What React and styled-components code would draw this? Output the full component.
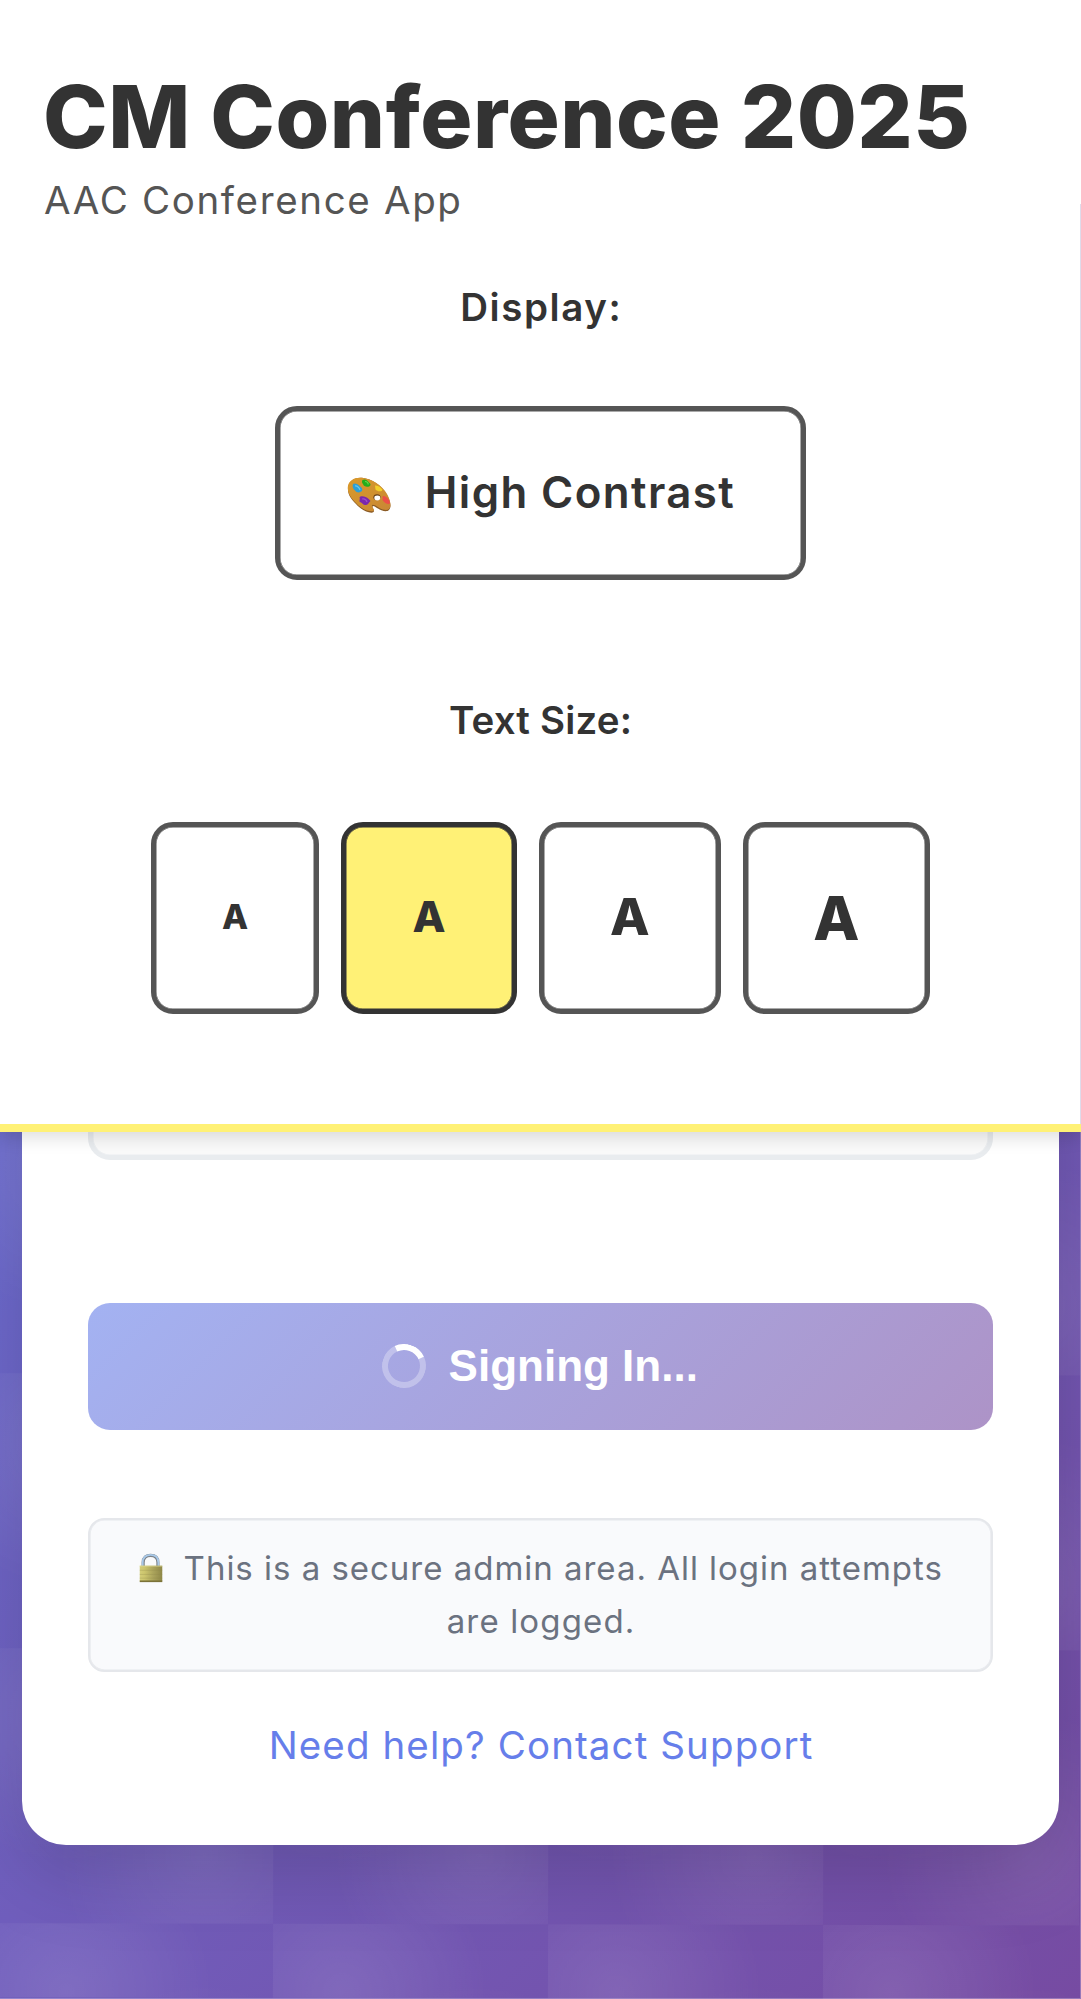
import React from "react";
import styled, { createGlobalStyle } from "styled-components";

const GlobalStyle = createGlobalStyle`
  *, *::before, *::after { box-sizing: border-box; }
  body { margin: 0; font-family: "Inter", "Open Sans", sans-serif; color: #333; }
  button { font: inherit; color: inherit; margin: 0; padding: 0; }
`;

const Page = styled.div`
  position: relative;
  height: 1999px;
  overflow: hidden;
  background: linear-gradient(135deg, #667eea 0%, #764ba2 100%);

  &::before {
    content: "";
    position: absolute;
    inset: 0;
    background:
      radial-gradient(circle at 25% 25%, rgba(255, 255, 255, 0.1) 0%, transparent 50%) 0 0 / 275px 275px,
      radial-gradient(circle at 75% 75%, rgba(255, 255, 255, 0.09) 0%, transparent 50%) 0 0 / 275px 275px;
    transform: translateY(-0.7px) rotate(0.12deg);
  }

  &::after {
    content: "";
    position: absolute;
    inset: 0;
    box-shadow: inset -1px -1px 0 rgba(255, 255, 255, 0.25);
  }
`;

const Header = styled.header`
  position: relative;
  z-index: 2;
  height: 1132px;
  padding: 64px 44px 0;
  background: linear-gradient(#dedbea, #dedbea) 100% 204px / 1px 920px no-repeat, #fff;
  border-bottom: 8.25px solid #fff176;
  box-shadow: 0 5.5px 16px rgba(0, 0, 0, 0.13);
`;

/* The negative margin drops the tracking that follows the last letter, so centred text stays centred. */
const Tracked = styled.span`
  letter-spacing: ${(p) => p.$tracking}px;
  margin-right: ${(p) => -p.$tracking}px;
  white-space: nowrap;
`;

const Title = styled.h1`
  margin: 0 0 0 -1px;
  font-size: 87px;
  line-height: 106px;
  font-weight: 800;
`;

const Subtitle = styled.p`
  margin: 0;
  font-size: 38.5px;
  line-height: 60px;
  color: #555;
`;

const Group = styled.section`
  display: flex;
  flex-direction: column;
  align-items: center;
  margin-top: ${(p) => p.$space}px;
`;

const GroupLabel = styled(Tracked)`
  font-size: 38.5px;
  line-height: 60px;
  font-weight: 600;
`;

const ContrastButton = styled.button`
  display: flex;
  align-items: center;
  justify-content: center;
  gap: 33.5px;
  width: 531px;
  height: 174px;
  margin-top: 69px;
  padding-bottom: 2px;
  border: 5.5px solid #555;
  border-radius: 22px;
  background: #fff;
  box-shadow: inset 0 0 0 0.5px #555;
  font-size: 43.8px;
  font-weight: 600;
`;

const PaletteSvg = styled.svg`
  width: 44px;
  height: 36px;
  margin-top: 6px;
`;

const SizeRow = styled.div`
  display: flex;
  gap: 22px;
  margin-top: 71.5px;
`;

const SizeButton = styled.button`
  width: ${(p) => p.$width}px;
  height: 192.5px;
  padding-bottom: ${(p) => p.$lift}px;
  border: 5.5px solid ${(p) => (p.$active ? "#333" : "#555")};
  border-radius: 22px;
  background: ${(p) => (p.$active ? "#fff176" : "#fff")};
  box-shadow: inset 0 0 0 0.5px ${(p) => (p.$active ? "#333" : "#555")};
  font-size: ${(p) => p.$size}px;
  font-weight: 800;
`;

const Card = styled.main`
  position: relative;
  z-index: 1;
  width: 1037px;
  height: 812.5px;
  margin: -100px auto 0;
  padding: 0 66px;
  background: #fff;
  border-radius: 0 0 44px 44px;
  box-shadow: 0 27.5px 82.5px rgba(0, 0, 0, 0.16);
`;

const Field = styled.div`
  height: 128px;
  border: 5.5px solid #e9ecef;
  border-radius: 22px;
  background: #fafafa;
  box-shadow: inset 0 0 0 0.5px #e9ecef;
`;

const SubmitButton = styled.button`
  display: flex;
  align-items: center;
  justify-content: center;
  gap: 22.5px;
  width: 100%;
  height: 126.5px;
  margin-top: 143px;
  padding-right: 1px;
  border: 0;
  border-radius: 22px;
  background: linear-gradient(135deg, #a3b2f2 0%, #ad93c7 100%);
  color: #fff;
  font-family: "Liberation Sans", Arial, sans-serif;
  font-size: 44px;
  font-weight: 700;
`;

const Spinner = styled.span`
  width: 44px;
  height: 44px;
  border: 6px solid rgba(255, 255, 255, 0.3);
  border-top-color: #fff;
  border-radius: 50%;
  transform: rotate(20deg);
`;

const Notice = styled.div`
  height: 154px;
  margin-top: 88px;
  padding-top: 22.5px;
  border: 2px solid #e5e7eb;
  border-radius: 16.5px;
  background: #f9fafc;
  box-shadow: inset 0 0 0 0.6px #e5e7eb;
  color: #6b7280;
  font-size: 33px;
  line-height: 52.8px;
`;

const NoticeLine = styled.div`
  display: flex;
  align-items: center;
  justify-content: center;
  gap: 20.5px;
`;

const LockSvg = styled.svg`
  width: 24px;
  height: 30px;
`;

const HelpLink = styled.a`
  display: flex;
  justify-content: center;
  margin-top: 43.5px;
  color: #667eea;
  font-size: 38.5px;
  line-height: 60px;
`;

function PaletteIcon() {
  return (
    <PaletteSvg viewBox="0 0 44 36">
      <defs>
        <linearGradient id="wood" x1="0" y1="0" x2="1" y2="1">
          <stop offset="0" stopColor="#dc9a2a" />
          <stop offset="0.5" stopColor="#d0912f" />
          <stop offset="1" stopColor="#c98636" />
        </linearGradient>
      </defs>
      <path
        d="M1 11C1.500 4 8 0 15 .8C25 1.800 35 9 40 18C43 23.500 45 30 42 33C39.500 35.500 34 33.500 30 31C27.500 29.300 25.500 28.300 25.500 30C25.500 32 28 33.500 26.500 35C24 37.500 14 33 9 27C4 22 .5 17 1 11Z"
        fill="#8a5a24"
      />
      <path
        d="M.8 10C1.300 3.300 8 0 15 .8C25 1.800 35 8.500 40 17C43 22.500 45 29 42 32C39.500 34.300 34 32.300 30.500 29.700C28 27.800 24.800 26.800 25 28.700C25.200 31 28 32 26.500 33.700C24 36 14 32 9 26C4 21 .4 16 .8 10Z"
        fill="url(#wood)"
      />
      <ellipse cx="30" cy="20.300" rx="3.600" ry="3" fill="#684016" />
      <ellipse cx="30.300" cy="21" rx="3" ry="2.400" fill="#fff" />
      <path d="M6 7C8 5.500 11 7 12.500 9C14.500 10 16 12 15 14C13 16 9.500 16 8 13.500C6 12 5 9 6 7Z" fill="#2d9fd6" />
      <path d="M8 9C10 8.500 12.500 11 13 13" stroke="#67c9ef" strokeWidth="1.200" fill="none" />
      <path d="M15.500 3C18 1.500 21 3.500 22 5.500C24 6.500 24 8.500 22.500 9.300C20 10.500 16.500 9.500 16 7C15 6 14.600 4.500 15.500 3Z" fill="#25ac1b" />
      <path d="M18 4.500C20 4.500 21.500 6 21 7.500" stroke="#62d84c" strokeWidth="1.200" fill="none" />
      <path d="M28 8.500C31 8 34 10.500 35.500 12.500C35.500 14.500 32 15 30 13.500C28 13 28.500 11.500 28 8.500Z" fill="#f3cf2a" />
      <path d="M36 19C38.500 18.500 41 21 42.500 24C43.500 26 43 27.500 41 27C38.500 26.500 36.500 24.500 35.500 23C36 21.500 35 20 36 19Z" fill="#ec4f48" />
      <path d="M12.500 20.500C13 19 16.500 19 18.500 20C21 20.500 22 22.500 23.500 24C21.500 25.500 21.500 27.500 19 28C16 28.500 15.500 25.500 13 25C11.500 24 13.500 22.500 12.500 20.500Z" fill="#7a27ad" />
      <path d="M15 22C17.500 21.500 19.500 23 20 25" stroke="#9a4ccb" strokeWidth="1.200" fill="none" />
    </PaletteSvg>
  );
}

function LockIcon() {
  return (
    <LockSvg viewBox="0 0 26 32">
      <defs>
        <linearGradient id="brass" x1="0" x2="1" y1="0" y2="0">
          <stop offset="0" stopColor="#d3cd78" />
          <stop offset="0.2" stopColor="#cdc66e" />
          <stop offset="0.6" stopColor="#aba45c" />
          <stop offset="1" stopColor="#8f8848" />
        </linearGradient>
      </defs>
      <path d="M4.500 14V10C4.500 4.600 8 2.300 12.500 2.300S20.500 4.600 20.500 10V14" fill="none" stroke="#7d8287" strokeWidth="3.400" />
      <path d="M4 14V10C4 4.300 7.700 1.800 12.500 1.800S21 4.300 21 10V14" fill="none" stroke="#a9c9e9" strokeWidth="2" />
      <path d="M.8 13.500H25.200V30.500H.8Z" fill="url(#brass)" />
      <path d="M.8 29.500H25.200V31.300H.8Z" fill="#7b7238" />
      <path d="M.8 13.500H25.200V14.500H.8Z" fill="#e0da93" opacity="0.7" />
      <path d="M.8 18.500H25.200M.8 23H25.200M.8 27H25.200" stroke="#8f884a" strokeWidth="0.600" opacity="0.5" />
    </LockSvg>
  );
}

const SIZES = [
  { width: 168, size: 34, lift: 3 },
  { width: 176, size: 43, lift: 3 },
  { width: 181.5, size: 51.5, lift: 3 },
  { width: 187.5, size: 60, lift: 0 },
];

const ACTIVE_SIZE = 43;

export default function App() {
  return (
    <Page>
      <GlobalStyle />
      <Header>
        <Title><Tracked $tracking={0.5}>CM Conference 2025</Tracked></Title>
        <Subtitle><Tracked $tracking={1.65}>AAC Conference App</Tracked></Subtitle>
        <Group $space={47}>
          <GroupLabel $tracking={1.6}>Display:</GroupLabel>
          <ContrastButton>
            <PaletteIcon />
            <Tracked $tracking={1.4}>High Contrast</Tracked>
          </ContrastButton>
        </Group>
        <Group $space={110}>
          <GroupLabel $tracking={0.2}>Text Size:</GroupLabel>
          <SizeRow>
            {SIZES.map((s) => (
              <SizeButton key={s.size} $width={s.width} $size={s.size} $lift={s.lift} $active={s.size === ACTIVE_SIZE}>
                A
              </SizeButton>
            ))}
          </SizeRow>
        </Group>
      </Header>
      <Card>
        <Field />
        <SubmitButton><Spinner />Signing In...</SubmitButton>
        <Notice>
          <NoticeLine>
            <LockIcon />
            <Tracked $tracking={0.98}>This is a secure admin area. All login attempts</Tracked>
          </NoticeLine>
          <NoticeLine><Tracked $tracking={1.15}>are logged.</Tracked></NoticeLine>
        </Notice>
        <HelpLink><Tracked $tracking={1.1}>Need help? Contact Support</Tracked></HelpLink>
      </Card>
    </Page>
  );
}
